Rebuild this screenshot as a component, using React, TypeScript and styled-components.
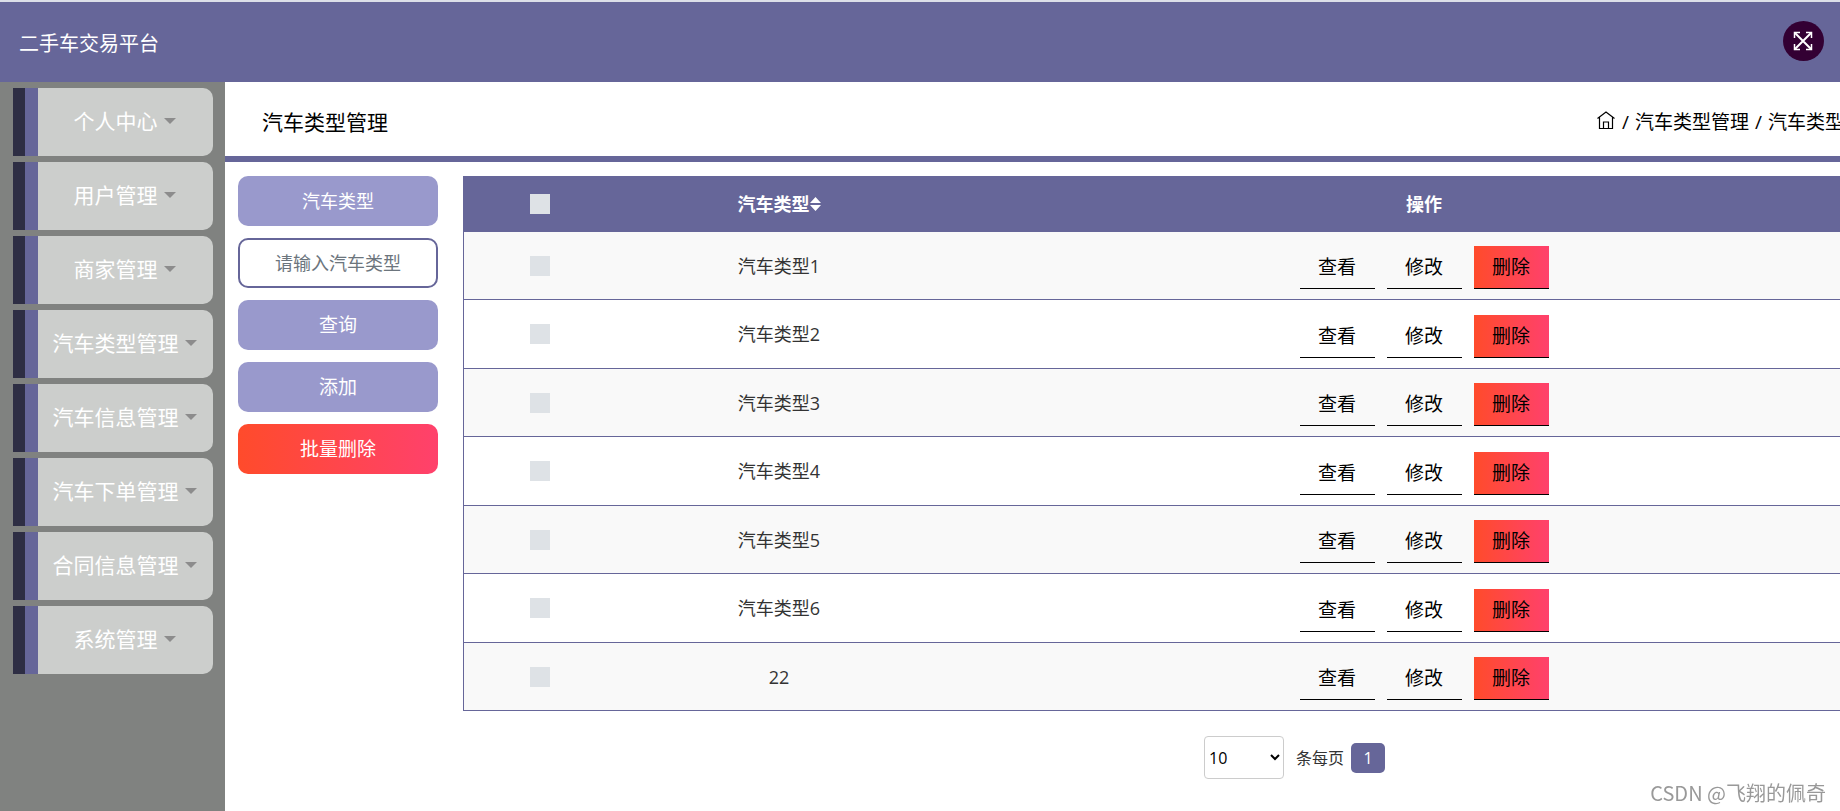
import React from "react";
import styled, { createGlobalStyle, css } from "styled-components";

const Global = createGlobalStyle`
  *, *::before, *::after { box-sizing: border-box; }
  body {
    margin: 0;
    overflow-x: hidden;
    background: #fff;
    color: #333;
    font-family: "Open Sans", "Noto Sans CJK SC", sans-serif;
    font-size: 18px;
    font-weight: 380;
    line-height: 24px;
  }
  button, input, select { font: inherit; margin: 0; }
  a { color: inherit; text-decoration: none; }
`;

const Page = styled.div`
  display: flex;
  flex-direction: column;
  min-height: 100vh;
  overflow: hidden;
`;

const TopBar = styled.header`
  display: flex;
  align-items: center;
  justify-content: space-between;
  height: 82px;
  padding: 0 16px 0 19px;
  border-top: 2px solid #dcdfe8;
  background: #669;
  color: #fff;
`;

const Brand = styled.h1`
  margin: 0;
  padding-top: 4px;
  font-size: 20px;
  font-weight: inherit;
`;

const RoundButton = styled.button`
  display: flex;
  align-items: center;
  justify-content: center;
  width: 41px;
  height: 40px;
  margin-bottom: 2px;
  padding: 0 2px 0 0;
  border: 0;
  border-radius: 50%;
  background: #303;
  color: #fff;
`;

const Body = styled.div`
  display: flex;
  flex: 1;
`;

const Sidebar = styled.nav`
  display: flex;
  flex: 0 0 225px;
  flex-direction: column;
  gap: 6px;
  padding: 6px 12px 6px 13px;
  background: #808280;
`;

const MenuItem = styled.button`
  display: flex;
  align-items: center;
  justify-content: center;
  gap: 6px;
  height: 68px;
  padding: 0 2px 2px 25px;
  border: 0;
  border-radius: 0 10px 10px 0;
  background: linear-gradient(to right, #2e2e44 12px, #669 12px, #669 25px, #cccecc 25px);
  color: #fff;
  font-size: 21px;
`;

const Caret = styled.span`
  border: 6px solid transparent;
  border-top-color: #8c8c8c;
  border-bottom: 0;
`;

const Main = styled.main`
  flex: 1;
  min-width: 0;
`;

const TitleBar = styled.div`
  display: flex;
  align-items: center;
  justify-content: space-between;
  height: 80px;
  padding: 6px 0 0 37px;
  border-bottom: 6px solid #669;
  color: #000;
`;

const Title = styled.h2`
  margin: 0;
  font-size: 21px;
  font-weight: inherit;
`;

const Crumbs = styled.nav`
  display: flex;
  align-items: center;
  gap: 6px;
  margin-right: -4px;
  font-size: 19px;
  white-space: nowrap;
`;

const HomeLink = styled.a`
  padding: 0 1px 4px 0;
`;

const Content = styled.div`
  display: flex;
  align-items: flex-start;
  gap: 25px;
  padding: 14px 0 0 13px;
`;

const Filters = styled.form`
  display: flex;
  flex: 0 0 200px;
  flex-direction: column;
  gap: 12px;
`;

const pill = css`
  width: 100%;
  height: 50px;
  border: 0;
  border-radius: 10px;
  text-align: center;
`;

const FilterLabel = styled.label`
  ${pill}
  background: #99c;
  color: #fff;
  line-height: 50px;
`;

const FilterInput = styled.input`
  ${pill}
  border: 2px solid #669;
  background: #fff;
  color: #333;
  &::placeholder { color: #6c757d; opacity: 1; }
`;

const FilterButton = styled.button<{ $danger?: boolean }>`
  ${pill}
  background: ${(p) => (p.$danger ? "linear-gradient(to right, #ff4b2b, #ff416c)" : "#99c")};
  color: #fff;
  font-size: 19px;
`;

const Listing = styled.section`
  flex: 1;
  min-width: 0;
`;

const Table = styled.table`
  width: calc(100% + 66px);
  table-layout: fixed;
  border-collapse: separate;
  border-spacing: 0;
  border-left: 1px solid #669;
  text-align: center;
`;

const HeadRow = styled.tr`
  height: 56px;
  background: #669;
  color: #fff;
`;

const Row = styled.tr`
  height: 68px;
  &:nth-child(odd) { background: #f9f9f9; }
  &:nth-child(even) { height: 69px; }
`;

const HeadCell = styled.th<{ $width?: string }>`
  width: ${(p) => p.$width ?? "auto"};
  padding: 0;
  font-weight: 700;
`;

const Cell = styled.td`
  padding: 0;
  border-bottom: 1px solid #669;
`;

const Tick = styled.input`
  appearance: none;
  display: block;
  width: 20px;
  height: 20px;
  margin: 0 auto;
  background: #dee2e6;
  &:checked { background: #99c; }
`;

const SortLabel = styled.span`
  display: inline-flex;
  align-items: center;
`;

const Actions = styled.div`
  display: flex;
  justify-content: center;
  gap: 12px;
  padding-top: 4px;
`;

const Action = styled.button<{ $danger?: boolean }>`
  width: 75px;
  height: 43px;
  padding: 0;
  border: 0;
  border-bottom: 1px solid #000;
  background: ${(p) => (p.$danger ? "linear-gradient(to right, #ff4b2b, #ff416c)" : "transparent")};
  color: #000;
  font-size: 19px;
`;

const Pager = styled.div`
  display: flex;
  align-items: center;
  justify-content: center;
  gap: 7px;
  padding: 25px 0 32px 286px;
  font-size: 16px;
`;

const PageSize = styled.label`
  display: flex;
  align-items: center;
  gap: 12px;
`;

const SizeSelect = styled.select`
  width: 80px;
  height: 43px;
  border: 1px solid #ccc;
  border-radius: 4px;
  background: #fff;
  color: #000;
`;

const PageNumber = styled.button`
  width: 34px;
  height: 30px;
  padding: 0;
  border: 0;
  border-radius: 5px;
  background: #669;
  color: #fff;
`;

const Watermark = styled.span`
  position: fixed;
  right: 14px;
  bottom: 6px;
  color: #999;
  font-family: "Noto Sans CJK SC", sans-serif;
  font-size: 20px;
`;

const ExpandIcon = () => (
  <svg width="20" height="20" viewBox="0 0 20 20" fill="none" stroke="currentColor" strokeWidth="2" aria-hidden="true">
    <path d="M2 2l16 16M18 2L2 18" />
    <path d="M1.500 7V1.500H7M13 1.500h5.500V7M18.500 13v5.500H13M7 18.500H1.500V13" strokeWidth="1.500" />
  </svg>
);

const HomeIcon = () => (
  <svg width="18" height="18" viewBox="0 0 18 18" fill="none" stroke="currentColor" strokeWidth="1.200" aria-hidden="true" display="block">
    <path d="M.5 7.500L9 1l8.500 6.500M2.500 6v11.500h13V6M6.500 17.500v-6.500h5v6.500" />
  </svg>
);

const SortIcon = () => (
  <svg width="11" height="16" viewBox="0 0 11 16" fill="currentColor" aria-hidden="true">
    <path d="M5.500 1L11 7H0zM5.500 15L0 9h11z" />
  </svg>
);

const menu = ["个人中心", "用户管理", "商家管理", "汽车类型管理", "汽车信息管理", "汽车下单管理", "合同信息管理", "系统管理"];
const types = ["汽车类型1", "汽车类型2", "汽车类型3", "汽车类型4", "汽车类型5", "汽车类型6", "22"];

export default function App() {
  return (
    <Page>
      <Global />
      <TopBar>
        <Brand>二手车交易平台</Brand>
        <RoundButton aria-label="全屏"><ExpandIcon /></RoundButton>
      </TopBar>
      <Body>
        <Sidebar>
          {menu.map((name) => (
            <MenuItem key={name}>{name}<Caret /></MenuItem>
          ))}
        </Sidebar>
        <Main>
          <TitleBar>
            <Title>汽车类型管理</Title>
            <Crumbs>
              <HomeLink href="#home" aria-label="首页"><HomeIcon /></HomeLink>
              <span>/</span>
              <a href="#types">汽车类型管理</a>
              <span>/</span>
              <a href="#list">汽车类型</a>
            </Crumbs>
          </TitleBar>
          <Content>
            <Filters onSubmit={(e) => e.preventDefault()}>
              <FilterLabel htmlFor="type">汽车类型</FilterLabel>
              <FilterInput id="type" placeholder="请输入汽车类型" />
              <FilterButton type="submit">查询</FilterButton>
              <FilterButton type="button">添加</FilterButton>
              <FilterButton type="button" $danger>批量删除</FilterButton>
            </Filters>
            <Listing>
              <Table>
                <thead>
                  <HeadRow>
                    <HeadCell $width="152px"><Tick type="checkbox" aria-label="全选" /></HeadCell>
                    <HeadCell $width="326px"><SortLabel>汽车类型<SortIcon /></SortLabel></HeadCell>
                    <HeadCell>操作</HeadCell>
                  </HeadRow>
                </thead>
                <tbody>
                  {types.map((name) => (
                    <Row key={name}>
                      <Cell><Tick type="checkbox" aria-label={name} /></Cell>
                      <Cell>{name}</Cell>
                      <Cell>
                        <Actions>
                          <Action>查看</Action>
                          <Action>修改</Action>
                          <Action $danger>删除</Action>
                        </Actions>
                      </Cell>
                    </Row>
                  ))}
                </tbody>
              </Table>
              <Pager>
                <PageSize>
                  <SizeSelect defaultValue="10">
                    <option>10</option>
                    <option>20</option>
                    <option>50</option>
                  </SizeSelect>
                  条每页
                </PageSize>
                <PageNumber>1</PageNumber>
              </Pager>
            </Listing>
          </Content>
        </Main>
      </Body>
      <Watermark>CSDN @飞翔的佩奇</Watermark>
    </Page>
  );
}
